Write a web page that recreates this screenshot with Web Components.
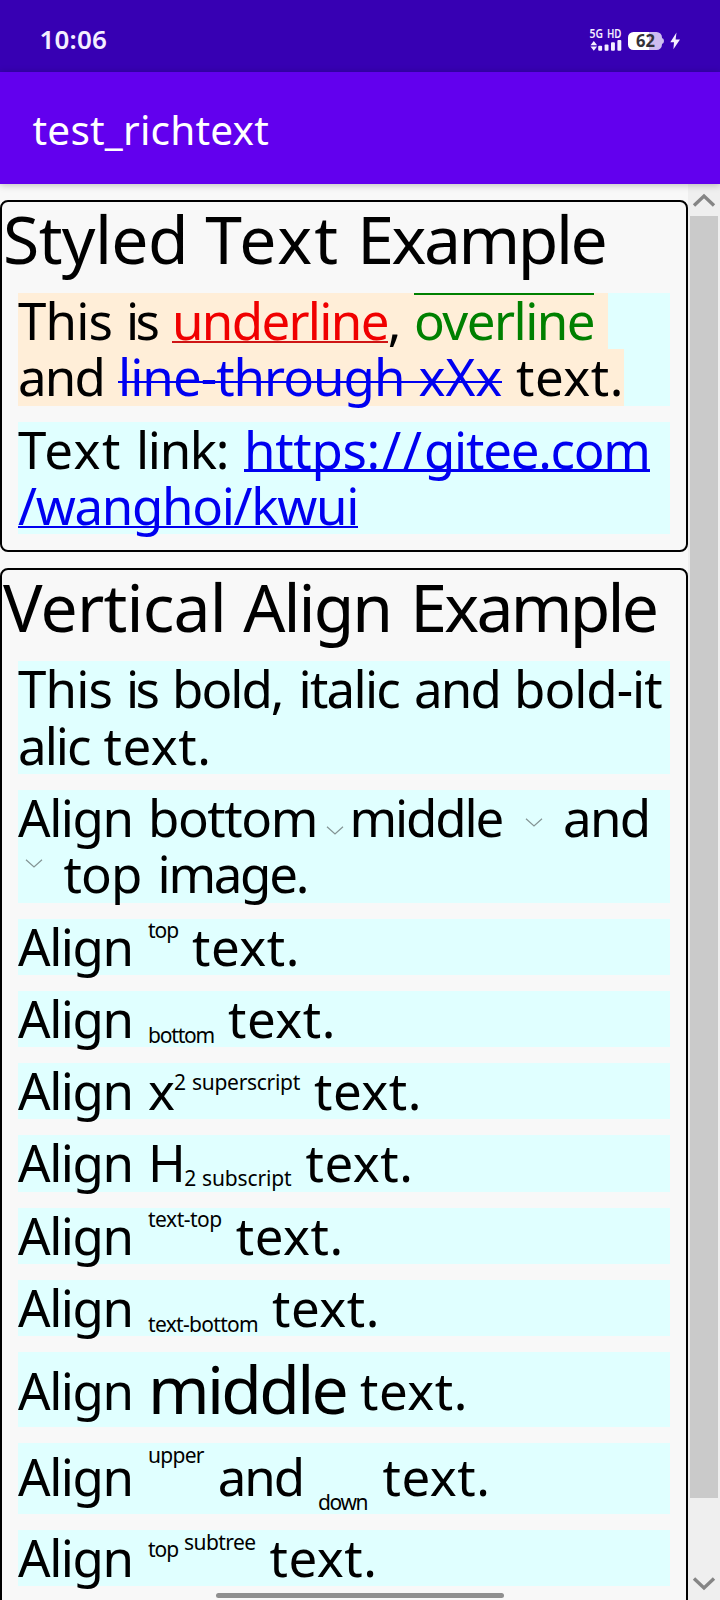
<!DOCTYPE html>
<html lang="en">
<head>
<meta charset="utf-8">
<title>test_richtext</title>
<style>
html,body{margin:0;padding:0;background:#f8f8f8}
body{font-family:"Noto Sans","Open Sans",sans-serif;color:#000;width:720px;height:1600px;overflow:hidden}
</style>
</head>
<body>
<rich-app>
  <rich-card>
    <rich-title><t-w w="185">Styled</t-w> <t-w w="135">Text</t-w> <t-w w="248">Example</t-w></rich-title>
    <rich-para>
      <rich-line mark style="width:590px"><t-w w="94">This</t-w> <t-w w="32" trim="2">is</t-w> <t-mark style="color:#f00000;--line:#cf1515;--at:47.7px"><t-w w="215.7">underline</t-w></t-mark><t-w w="12.3">,</t-w> <t-mark style="color:#008000;--at:0px"><t-w w="180">overline</t-w></t-mark></rich-line>
      <rich-line mark style="width:606px"><t-w w="86">and</t-w> <t-mark style="color:#0000f0;--at:31.3px"><t-w w="286.5">line-through</t-w> <t-w w="83.5">xXx</t-w></t-mark> <t-w w="108">text.</t-w></rich-line>
    </rich-para>
    <rich-para>
      <rich-line><t-w w="104">Text</t-w> <t-w w="94" trim="2">link:</t-w> <t-mark style="color:#0000f0;--at:47.6px"><t-w w="122.5">https</t-w><t-w w="57.5">://</t-w><t-w w="225.7">gitee.com</t-w></t-mark></rich-line>
      <rich-line><t-mark style="color:#0000f0;--at:47.6px"><t-w w="340">/wanghoi/kwui</t-w></t-mark></rich-line>
    </rich-para>
  </rich-card>
  <rich-card open-end>
    <rich-title><t-w w="223">Vertical</t-w> <t-w w="150" trim="2">Align</t-w> <t-w w="246">Example</t-w></rich-title>
    <rich-para>
      <rich-line><t-w w="94">This</t-w> <t-w w="32" trim="2">is</t-w> <t-w w="112.5" trim="2">bold,</t-w> <t-w w="101.5" trim="1">italic</t-w> <t-w w="86">and</t-w> <t-w w="147.5">bold-it</t-w></rich-line>
      <rich-line><t-w w="71.5">alic</t-w> <t-w w="108">text.</t-w></rich-line>
    </rich-para>
    <rich-para>
      <rich-line><t-w w="116" trim="1.5">Align</t-w> <t-w w="170.5" trim="1.5">bottom</t-w><t-chevron up="1.5" style="width:31px"></t-chevron><t-w w="154.5" trim="2">middle</t-w> <t-chevron up="9.5" style="width:31px"></t-chevron> <t-w w="86.5">and</t-w></rich-line>
      <rich-line><t-chevron up="25.5" style="width:31.5px"></t-chevron> <t-w w="80" trim="2">top</t-w> <t-w w="149.5">image.</t-w></rich-line>
    </rich-para>
    <rich-para><rich-line><t-w w="116" trim="1.5">Align</t-w> <t-w size="21" up="27.3" w="30">top</t-w> <t-w w="108">text.</t-w></rich-line></rich-para>
    <rich-para><rich-line><t-w w="116" trim="1.5">Align</t-w> <t-w size="21" up="-5.3" w="66">bottom</t-w> <t-w w="108">text.</t-w></rich-line></rich-para>
    <rich-para><rich-line><t-w w="116" trim="1.5">Align</t-w> <t-w w="26">x</t-w><t-w size="21" up="20.5" w="18">2</t-w><t-w size="21" up="20.5" w="108">superscript</t-w> <t-w w="108">text.</t-w></rich-line></rich-para>
    <rich-para><rich-line><t-w w="116" trim="1.5">Align</t-w> <t-w w="36.3">H</t-w><t-w size="21" up="-4" w="17.7">2</t-w><t-w size="21" up="-4" w="89.5">subscript</t-w> <t-w w="108">text.</t-w></rich-line></rich-para>
    <rich-para><rich-line><t-w w="116" trim="1.5">Align</t-w> <t-w size="21" up="27.3" w="73.7">text-top</t-w> <t-w w="108">text.</t-w></rich-line></rich-para>
    <rich-para><rich-line><t-w w="116" trim="1.5">Align</t-w> <t-w size="21" up="-5.3" w="110">text-bottom</t-w> <t-w w="108">text.</t-w></rich-line></rich-para>
    <rich-para><rich-line style="height:74.3px;padding-top:10.2px"><t-w w="116" trim="1.5">Align</t-w> <t-w size="66" up="-4.3" w="198">middle</t-w> <t-w w="108">text.</t-w></rich-line></rich-para>
    <rich-para><rich-line style="height:71.4px;padding-top:6.2px"><t-w w="116" trim="1.5">Align</t-w> <t-w size="21" up="33" w="55.7">upper</t-w> <t-w w="86.3" trim="1">and</t-w> <t-w size="21" up="-14.3" w="50.5" trim="1.5">down</t-w> <t-w w="108">text.</t-w></rich-line></rich-para>
    <rich-para><rich-line><t-w w="116" trim="1.5">Align</t-w> <t-w size="21" up="19.7" w="36" trim="6">top</t-w><t-w size="21" up="27.3" w="71.5">subtree</t-w> <t-w w="108">text.</t-w></rich-line></rich-para>
  </rich-card>
</rich-app>
<script>
function define(name, html, setup) {
  customElements.define(name, class extends HTMLElement {
    constructor() {
      super();
      this.attachShadow({mode: 'open'}).innerHTML = html;
    }
    connectedCallback() { if (setup) setup(this, this.shadowRoot); }
  });
}

define('status-bar', `<style>
:host{display:flex;justify-content:space-between;box-sizing:border-box;height:72px;padding:0 40px 0 39.500px;background:#3700b3;color:#f4efff}
.time{font-size:26px;font-weight:600;line-height:78px}
svg{display:block;margin-top:26px}
text{font-family:"Noto Sans",sans-serif}
</style>
<t-w class="time" w="67.5">10:06</t-w>
<svg width="92" height="28" viewBox="588 26 92 28" fill="#f4efff">
<text x="589.5" y="37.8" font-size="12.2" font-weight="600" textLength="13.5" lengthAdjust="spacingAndGlyphs">5G</text>
<text x="607" y="37.8" font-size="12.2" font-weight="600" textLength="14.5" lengthAdjust="spacingAndGlyphs">HD</text>
<path d="M590.5 45.2L593.8 41l3.3 4.2zM590.5 46.6h6.6l-3.3 4.2z"/>
<rect x="598.2" y="45.8" width="3.9" height="5" rx="1"/><rect x="604.6" y="44.5" width="3.9" height="6.3" rx="1"/><rect x="611" y="42.2" width="3.9" height="8.6" rx="1"/><rect x="617.4" y="40" width="3.9" height="10.8" rx="1"/>
<path d="M633.5 32H649V50H633.5A5.5 5.5 0 0 1 628 44.5V37.5A5.5 5.5 0 0 1 633.5 32z" fill="#fff"/>
<path d="M649 32h7.500A5.500 5.500 0 0 1 662 37.500V38Q664 38.500 664 41T662 44v.5A5.500 5.500 0 0 1 656.500 50H649z" fill="#cdbdf0"/>
<text x="636" y="47" font-size="17" font-weight="700" fill="#343238" textLength="19" lengthAdjust="spacingAndGlyphs">62</text>
<path d="M676.500 32.500L670.300 42.300h3.700l-.6 7 6.600-9.800h-4.400z"/>
</svg>`);

define('app-bar', `<style>
:host{display:block;height:112px;box-sizing:border-box;padding-left:32.500px;background:#6200ee;color:#fff;box-shadow:0 1px 7px rgba(0,0,0,.25);position:relative;z-index:1;font-size:40.500px;font-weight:450;line-height:115px}
</style><t-w w="236.5"><slot></slot></t-w>`);

define('scroll-track', `<style>
:host{display:flex;flex-direction:column;align-items:center;width:32px;height:1416px;background:#efefef}
.up{margin-top:8px}
.thumb{width:28px;height:1282.3px;margin-top:8px;background:#cacaca}
.down{margin-top:77px}
svg{display:block;flex:none}
path{fill:none;stroke:#858585;stroke-width:3.4}
</style>
<svg class="up" width="24" height="16"><path d="M2 13.500L12 4l10 9.500"/></svg>
<div class="thumb"></div>
<svg class="down" width="24" height="16"><path d="M2 3.500L12 13l10-9.500"/></svg>`);

define('rich-app', `<style>
:host{display:block;width:720px;height:1600px;overflow:hidden;position:relative}
.body{display:flex;height:1416px}
.cards{width:688px;box-sizing:border-box;padding-top:16px;display:flex;flex-direction:column;gap:16.300px}
.home{position:absolute;z-index:2;left:216px;top:1592.500px;width:288px;height:5.500px;border-radius:3px;background:#8f8f8f}
</style>
<status-bar></status-bar><app-bar>test_richtext</app-bar>
<div class="body"><div class="cards"><slot></slot></div><scroll-track></scroll-track></div>
<div class="home"></div>`);

define('rich-card', `<style>
:host{display:flex;flex-direction:column;gap:16px;flex:none;box-sizing:border-box;width:688px;height:352px;border:2px solid #000;border-radius:8px}
:host([open-end]){height:1080px}
</style><slot></slot>`);

define('rich-title', `<style>
:host{display:block;height:75.100px;padding-left:1px;font-size:66px;line-height:72.800px;white-space:nowrap;flex:none}
</style><slot></slot>`);

define('rich-para', `<style>
:host{display:block;flex:none;width:652px;margin-left:16px;background:#e0ffff}
</style><slot></slot>`);

define('rich-line', `<style>
:host{display:block;box-sizing:border-box;height:56.300px;font-size:51px;line-height:54.300px;word-spacing:.74px;white-space:nowrap}
:host([mark]){background:#ffeed8}
</style><slot></slot>`);

define('t-mark', `<style>
:host{display:inline-block;position:relative}
:host::after{content:"";position:absolute;left:0;right:0;top:var(--at);height:2.300px;background:var(--line,currentColor)}
</style><slot></slot>`);

define('t-chevron', `<style>
:host{display:inline-block;width:30px;height:9px;line-height:0}
path{fill:none;stroke:#849494;stroke-width:1.200}
</style><svg width="30" height="9"><path d="M8 .7l8 7.300 8-7.300"/></svg>`, el => {
  el.style.verticalAlign = el.getAttribute('up') + 'px';
});

// A word whose letters are spaced to fill its advance "w", less an optional "trim" left blank after it.
define('t-w', `<style>
:host{display:inline-block;white-space:nowrap}
:host([size]){line-height:0}
</style><span><slot></slot></span>`, (el, root) => {
  const w = parseFloat(el.getAttribute('w'));
  const trim = parseFloat(el.getAttribute('trim') || 0);
  const size = el.getAttribute('size');
  if (size) el.style.fontSize = size + 'px';
  if (el.hasAttribute('up')) el.style.verticalAlign = el.getAttribute('up') + 'px';
  const fit = () => {
    const span = root.querySelector('span');
    span.style.letterSpacing = '0';
    const natural = span.getBoundingClientRect().width;
    let text = el.textContent;
    if (!text && el.getRootNode().host) text = el.getRootNode().host.textContent;
    if (text.length > 1) span.style.letterSpacing = ((w - trim - natural) / text.length) + 'px';
    el.style.width = w + 'px';
  };
  requestAnimationFrame(fit);
  fit();
});
</script>
</body>
</html>
